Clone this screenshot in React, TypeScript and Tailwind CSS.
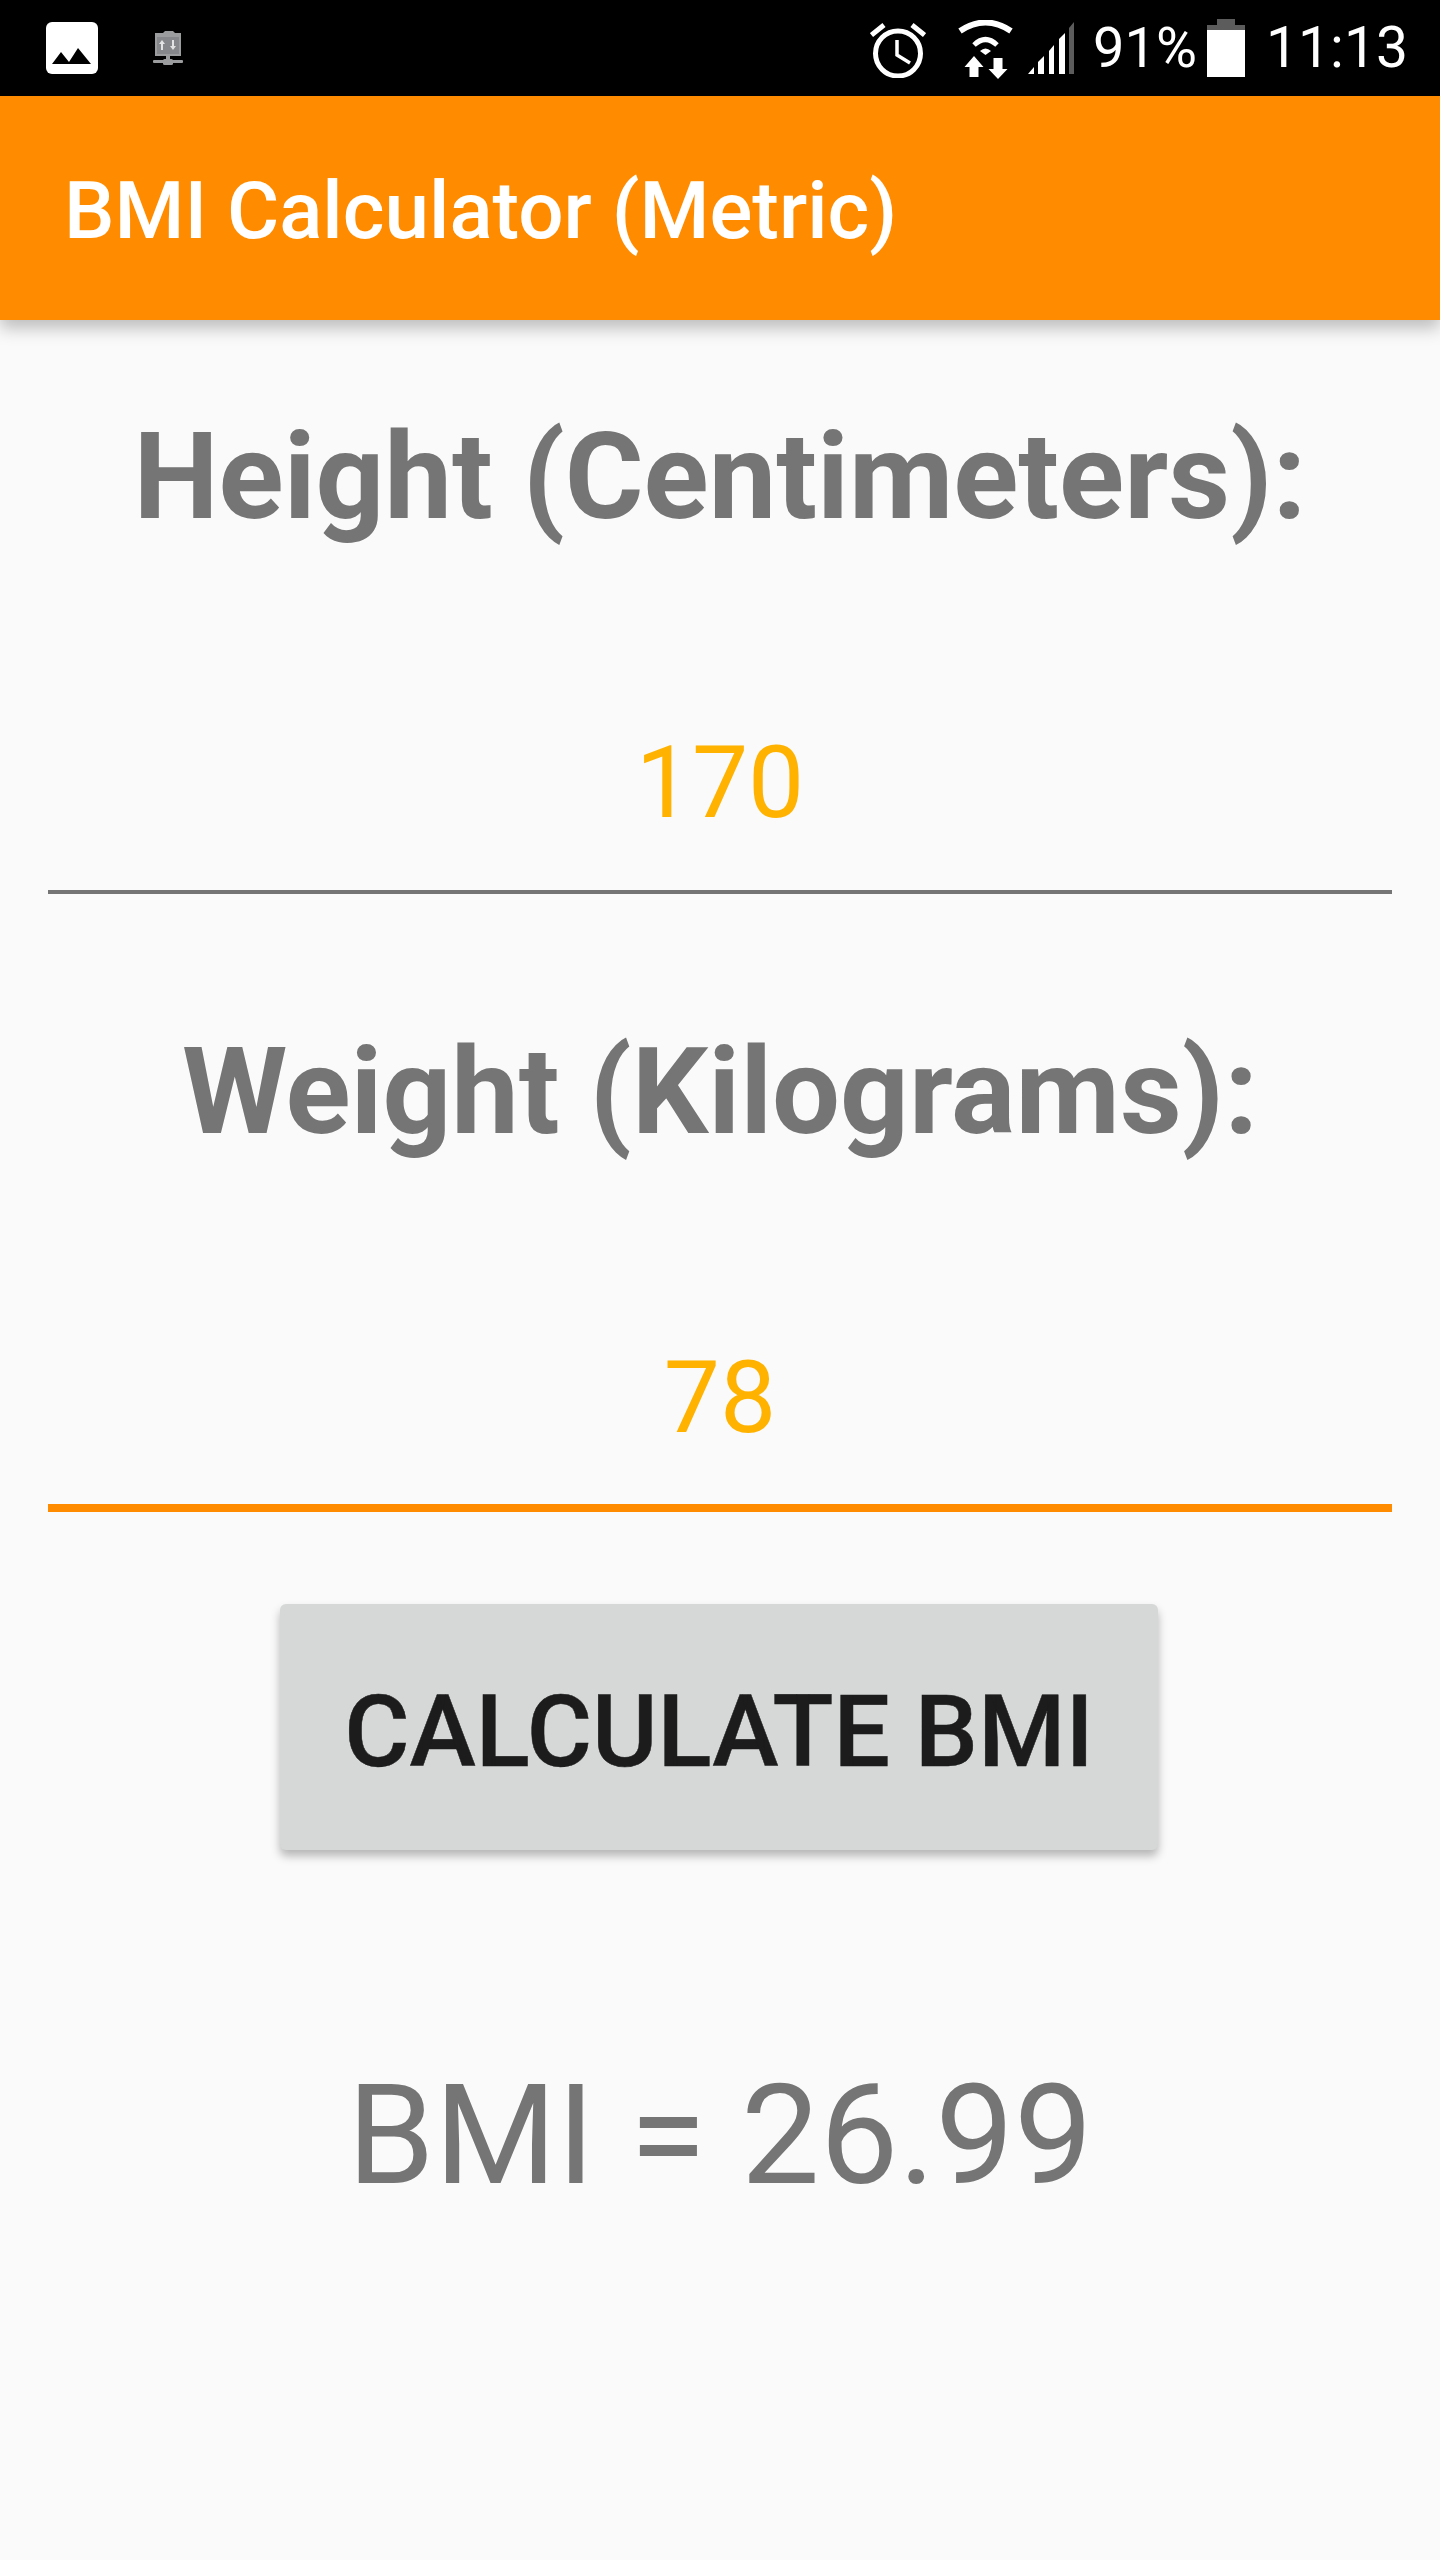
import React from "react";

const PictureIcon = () => (
  <svg width="52" height="52" viewBox="0 0 52 52">
    <rect x="0" y="0" width="52" height="52" rx="6" fill="#fff" />
    <path d="M6 42 L15 30 L23 40 L32 26 L45 42 Z" fill="#000" />
  </svg>
);

const NetworkIcon = () => (
  <svg width="30" height="36" viewBox="0 0 30 36" className="blur-[0.5px]">
    <path d="M2 3 H10 L12 1 H20 L22 3 H28 V26 H2 Z" fill="#9b9c9d" />
    <rect x="4" y="7" width="22" height="17" fill="#85878a" />
    <path d="M9 10 L12 14 H10 V20 H8 V14 H6 Z M20 20 L23 16 H21 V10 H19 V16 H17 Z" fill="#e3e3e3" />
    <rect x="13" y="26" width="4" height="5" fill="#9b9c9d" />
    <rect x="0" y="30" width="30" height="3" rx="1" fill="#9b9c9d" />
    <rect x="10" y="29" width="10" height="6" rx="1.5" fill="#9b9c9d" />
  </svg>
);

const AlarmIcon = () => (
  <svg width="56" height="58" viewBox="0 0 56 58" fill="none" stroke="#fff" className="mt-[2px]">
    <circle cx="28" cy="33.5" r="22.5" strokeWidth="5" />
    <path d="M27 20 V35 L40 43" strokeWidth="3.5" />
    <path d="M1.5 15 L14 5 M54.5 15 L42 5" strokeWidth="5" />
  </svg>
);

const WifiIcon = () => (
  <svg width="56" height="60" viewBox="0 0 56 60" className="mt-[4px]">
    <path d="M2 11 Q27.5 -6 53 11" fill="none" stroke="#fff" strokeWidth="6" />
    <path d="M16 25 Q27.5 14 39 25" fill="none" stroke="#fff" strokeWidth="5" />
    <path d="M22 31 Q27.5 26 33 31 L27.5 35 Z" fill="#fff" />
    <path d="M16 36 L25.5 47 H20.5 V57 H11.5 V47 H6.5 Z" fill="#fff" />
    <path d="M35.5 38 H44.5 V49 H49.5 L40 59 L30.5 49 H35.5 Z" fill="#fff" />
  </svg>
);

const SignalIcon = () => (
  <svg width="46" height="52" viewBox="0 0 46 52">
    <path d="M0 52 L6 45 V52 Z" fill="#fff" />
    <path d="M10 52 V40 L16 34 V52 Z" fill="#fff" />
    <path d="M21 52 V29 L26 23 V52 Z" fill="#fff" />
    <path d="M31 52 V17 L37 11 V52 Z" fill="#fff" />
    <path d="M41 52 V6 L46 0 V52 Z" fill="#5c5c5c" />
  </svg>
);

const BatteryIcon = () => (
  <div className="flex w-[38px] flex-col items-center">
    <div className="h-[6px] w-[18px] bg-[#5c5c5c]" />
    <div className="h-[5px] w-full bg-[#5c5c5c]" />
    <div className="h-[47px] w-full bg-white" />
  </div>
);

const Field = ({ label, value, lineClass }: { label: string; value: string; lineClass: string }) => (
  <>
    <h2 className="text-center text-[120.5px] leading-[140px] font-bold text-[#757575]">{label}</h2>
    <div className="mt-[177px] text-center text-[100px] leading-[117px] text-[#ffb300]">{value}</div>
    <div className={lineClass} />
  </>
);

export default function App() {
  return (
    <div className="flex h-[2560px] w-[1440px] flex-col bg-[#fafafa] font-['Roboto',sans-serif]">
      <div className="flex h-[96px] items-center justify-between bg-black pr-[32px] pl-[46px]">
        <div className="flex items-center gap-[55px]">
          <PictureIcon />
          <NetworkIcon />
        </div>
        <div className="flex items-center">
          <AlarmIcon />
          <div className="ml-[32px] flex">
            <WifiIcon />
          </div>
          <div className="ml-[14px] flex">
            <SignalIcon />
          </div>
          <span className="ml-[19px] text-[56px] leading-[66px] text-white">91%</span>
          <div className="ml-[10px]">
            <BatteryIcon />
          </div>
          <span className="ml-[21px] text-[57px] leading-[66px] text-white">11:13</span>
        </div>
      </div>

      <header className="z-10 flex h-[224px] items-center bg-[#ff8c00] pt-[6px] pl-[64px] shadow-[0_8px_16px_rgba(0,0,0,0.25)]">
        <h1 className="text-[80px] leading-[94px] font-medium text-white">BMI Calculator (Metric)</h1>
      </header>

      <main className="flex flex-col pt-[87px]">
        <Field label="Height (Centimeters):" value="170" lineClass="mx-[48px] mt-[49px] h-[4px] bg-[#757575]" />
        <div className="h-[128px]" />
        <Field label="Weight (Kilograms):" value="78" lineClass="mx-[48px] mt-[48px] h-[8px] bg-[#ff8c00]" />
        <button className="mt-[92px] ml-[280px] h-[246px] w-[878px] rounded-[6px] bg-[#d6d7d7] pt-[8px] text-[100px] leading-[117px] font-medium text-[#1c1c1c] shadow-[0_6px_10px_rgba(0,0,0,0.28)] [-webkit-text-stroke:0.5px_#1c1c1c]">
          CALCULATE BMI
        </button>
        <div className="mt-[203px] text-center text-[140px] leading-[164px] text-[#757575]">BMI = 26.99</div>
      </main>
    </div>
  );
}
